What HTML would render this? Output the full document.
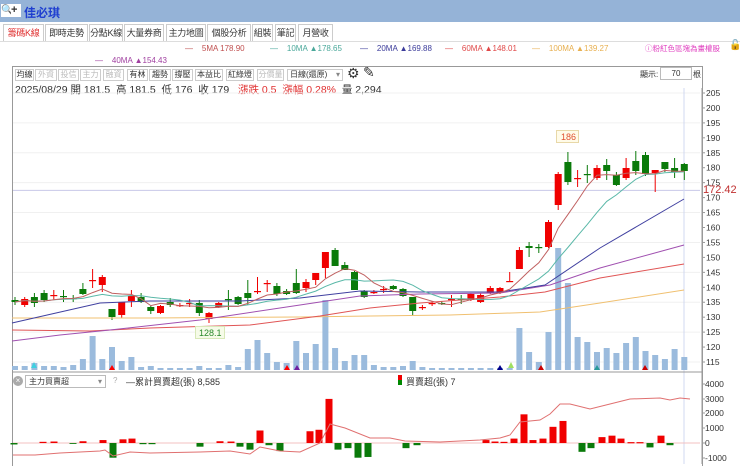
<!DOCTYPE html>
<html><head><meta charset="utf-8">
<style>
*{margin:0;padding:0;box-sizing:border-box}
body{width:740px;height:464px;overflow:hidden;background:#fff;font-family:"Liberation Sans","Noto Sans CJK TC",sans-serif;position:relative;font-size:9px;color:#333}
.a{position:absolute;white-space:nowrap}
.hdr{left:0;top:0;width:740px;height:22px;background:#95b3d7}
.tab{position:absolute;top:24px;height:17px;border:1px solid #ccc;border-bottom:none;background:#fff;font-size:9px;line-height:16px;text-align:center;color:#333;white-space:nowrap;overflow:hidden;letter-spacing:-0.3px}
.btn{position:absolute;top:69px;height:12px;border:1px solid #ccc;font-size:8px;line-height:10px;text-align:center;color:#333;background:#fff;white-space:nowrap;overflow:hidden}
.dis{color:#bbb}
.lg{font-size:8px;top:44px}
</style></head><body>
<div class="a hdr"></div>
<div class="a" style="left:1px;top:4px;width:12px;height:13px;background:#fff;font-size:10px;line-height:13px">&#128269;</div>
<div class="a" style="left:11px;top:4px;width:10px;height:13px;background:#fff;font-size:11px;line-height:13px;font-weight:bold">+</div>
<div class="a" style="left:24px;top:4px;font-size:12px;font-weight:bold;color:#1f3fd0">佳必琪</div>

<div class="tab" style="left:3px;width:41px;color:#e03030">籌碼K線</div>
<div class="tab" style="left:45px;width:43px">即時走勢</div>
<div class="tab" style="left:89px;width:34px">分點K線</div>
<div class="tab" style="left:124px;width:40px">大量券商</div>
<div class="tab" style="left:166px;width:40px">主力地圖</div>
<div class="tab" style="left:207px;width:44px">個股分析</div>
<div class="tab" style="left:252px;width:21px">組裝</div>
<div class="tab" style="left:275px;width:21px">筆記</div>
<div class="tab" style="left:298px;width:35px">月營收</div>
<div class="a" style="left:0;top:41px;width:740px;border-top:1px solid #ddd"></div>

<div class="a lg" style="left:185px;color:#c05050">—&nbsp;&nbsp;&nbsp; 5MA 178.90</div>
<div class="a lg" style="left:270px;color:#4aa89a">—&nbsp;&nbsp;&nbsp; 10MA ▲178.65</div>
<div class="a lg" style="left:360px;color:#3b3b9a">—&nbsp;&nbsp;&nbsp; 20MA ▲169.88</div>
<div class="a lg" style="left:445px;color:#e04848">—&nbsp;&nbsp;&nbsp; 60MA ▲148.01</div>
<div class="a lg" style="left:532px;color:#e8b050">—&nbsp;&nbsp;&nbsp; 100MA ▲139.27</div>
<div class="a lg" style="left:95px;top:56px;color:#a040a0">—&nbsp;&nbsp;&nbsp; 40MA ▲154.43</div>
<div class="a" style="left:645px;top:43px;color:#e040c0;font-size:7.5px">ⓘ粉紅色區塊為畫權股</div>
<div class="a" style="left:729px;top:40px;font-size:10px">🔓</div>

<div class="a" style="left:12px;top:66px;width:691px;height:400px;border:1px solid #999;border-bottom:none"></div>
<div class="btn" style="left:15px;width:19px">均線</div>
<div class="btn dis" style="left:35px;width:22px">外資</div>
<div class="btn dis" style="left:58px;width:21px">投信</div>
<div class="btn dis" style="left:80px;width:21px">主力</div>
<div class="btn dis" style="left:103px;width:21px">融資</div>
<div class="btn" style="left:127px;width:21px">有林</div>
<div class="btn" style="left:149px;width:22px">趨勢</div>
<div class="btn" style="left:172px;width:21px">撐壓</div>
<div class="btn" style="left:195px;width:28px">本益比</div>
<div class="btn" style="left:226px;width:28px">紅綠燈</div>
<div class="btn dis" style="left:257px;width:27px">分價量</div>
<div class="btn" style="left:287px;width:56px;text-align:left;padding-left:2px">日線(還原)<span style="float:right;margin-right:2px;color:#888">▾</span></div>
<div class="a" style="left:347px;top:65px;font-size:14px">⚙</div>
<div class="a" style="left:363px;top:64px;font-size:14px">✎</div>
<div class="a" style="left:640px;top:69px;font-size:8px">顯示:</div>
<div class="a" style="left:660px;top:67px;width:32px;height:13px;border:1px solid #bbb;font-size:8px;text-align:center;line-height:11px">70</div>
<div class="a" style="left:693px;top:69px;font-size:8px">根</div>
<div class="a" style="left:15px;top:82px;font-size:10.5px;color:#333">2025/08/29 開 181.5 &nbsp;高 181.5 &nbsp;低 176 &nbsp;收 179 &nbsp; <span style="color:#e03030">漲跌 0.5 &nbsp;漲幅 0.28%</span> &nbsp;量 2,294</div>

<svg class="a" id="s" style="left:0;top:0" width="740" height="464"></svg>

<div class="a" style="left:13px;top:376px;width:10px;height:10px;border-radius:50%;background:#aaa;color:#fff;font-size:8px;line-height:10px;text-align:center">×</div>
<div class="a" style="left:25px;top:375px;width:81px;height:13px;border:1px solid #bbb;background:#fff;font-size:8px;line-height:11px;padding-left:3px">主力買賣超<span style="float:right;margin-right:3px;color:#888">▾</span></div>
<div class="a" style="left:113px;top:376px;color:#aaa;font-size:8px">?</div>
<div class="a" style="left:126px;top:375px;font-size:9px">—累計買賣超(張) 8,585</div>
<div class="a" style="left:398px;top:375px;width:4px;height:10px;background:linear-gradient(#e00 50%,#080 50%)"></div>
<div class="a" style="left:406px;top:375px;font-size:9px">買賣超(張) 7</div>
<div class="a" style="left:703px;top:184px;font-size:11px;color:#c03030">172.42</div>

<script>
var s=document.getElementById('s'),h='';
function L(x1,y1,x2,y2,c,w){h+='<line x1="'+x1+'" y1="'+y1+'" x2="'+x2+'" y2="'+y2+'" stroke="'+c+'" stroke-width="'+(w||1)+'"/>';}
function R(x,y,w,hh,c){h+='<rect x="'+x+'" y="'+y+'" width="'+w+'" height="'+hh+'" fill="'+c+'"/>';}
function T(x,y,t,c,fs){h+='<text x="'+x+'" y="'+y+'" fill="'+(c||'#333')+'" font-size="'+(fs||9)+'" font-family="Liberation Sans">'+t+'</text>';}
function P(pts,c,w){h+='<polyline fill="none" stroke="'+c+'" stroke-width="'+(w||1)+'" points="'+pts.map(p=>p.join(',')).join(' ')+'"/>';}
for(var p=205;p>=115;p-=10){var y=93+(205-p)*2.989;L(13,y,700,y,'#f0f0f0');}
for(var p=205;p>=115;p-=5){var y=93+(205-p)*2.989;L(702,y,705,y,'#999');T(706,y+3,p,'#333',8.5);}
L(13,190.4,700,190.4,'#c8c8e8');
L(684,88,684,464,'#d0d8f0');
L(702,88,702,464,'#999');
L(13,372,702,372,'#999');
var vt=[366,366,363,366,366,367,365,359,336,359,347,361,357,367,366,368,368,368,368,366,368,368,365,367,349,340,353,362,363,341,353,344,300,348,361,355,355,365,367,367,366,361,367,368,368,368,368,368,368,368,368,368,328,352,362,332,248,283,337,342,352,348,353,343,337,351,355,359,349,357];
for(var i=0;i<70;i++){var x=15+i*9.7;R(x-3,vt[i],6,370-vt[i],'#9bbbdd');}
var c=[['g',300,302,297,305],['r',299,305,297,307],['g',297,303,293,307],['g',293,300,290,302],['r',295,295,290,300],['g',296,296,290,302],['g',298,298,295,302],['g',289,294,283,295],['r',280,280,269,288],['r',277,285,275,292],['g',309,317,309,320],['r',302,315,302,318],['r',296,301,290,307],['g',297,302,293,303],['g',307,311,306,314],['r',306,313,305,314],['g',302,305,298,307],['r',305,305,303,307],['r',303,303,299,307],['g',303,313,300,316],['r',313,319,312,323],['r',303,307,302,308],['g',299,299,290,310],['g',297,304,296,305],['g',293,298,280,305],['r',291,291,277,294],['r',283,283,280,292],['g',286,294,283,296],['g',291,294,289,295],['g',283,293,269,294],['r',282,288,279,292],['r',273,280,273,285],['r',252,268,252,278],['g',250,266,248,266],['g',265,270,262,270],['g',272,290,271,290],['g',291,297,290,298],
['r',292,292,290,294],['r',289,289,286,293],['g',286,289,285,290],['g',289,296,288,297],['g',297,311,297,316],['r',307,307,305,310],['r',303,303,301,306],['g',303,303,301,305],['r',299,299,295,307],['g',299,299,295,304],['r',294,300,293,301],['r',295,302,293,303],['r',288,293,286,294],['r',288,293,287,294],['r',281,281,272,282],['r',250,269,247,269],['g',246,248,242,257],['g',247,247,244,253],['r',222,247,220,248],['r',174,205,172,210],['g',162,182,152,185],['r',178,178,170,187],['g',174,174,165,183],['r',168,178,165,180],['g',165,171,159,180],['g',175,185,172,186],['r',168,178,158,180],['g',161,171,151,175],['g',155,174,152,176],['r',170,173,170,192],['g',162,169,162,172],['g',168,172,158,178],['g',164,171,163,180]];
var closes=[];
for(var i=0;i<70;i++){var d=c[i],x=15+i*9.7,col=d[0]=='r'?'#f00000':'#0a7a0a';L(x,d[3],x,d[4],col);R(x-3.5,d[1],7,Math.max(1.2,d[2]-d[1]),col);closes.push(d[0]=='r'?d[1]:d[2]);}
function ma(n){var a=[];for(var i=0;i<70;i++){var s0=0,k=0;for(var j=Math.max(0,i-n+1);j<=i;j++){s0+=closes[j];k++;}a.push([15+i*9.7,(s0/k).toFixed(1)]);}return a;}
P([[12,318],[150,318],[300,317],[370,316],[450,315],[540,312],[600,303],[684,290]],'#f0c070');
P([[12,330],[90,331],[150,328],[250,325],[320,316],[370,308],[420,303],[500,297],[545,292],[600,278],[684,264]],'#e05555');
P([[12,341],[60,335],[110,330],[200,320],[300,305],[360,296],[420,294],[500,293],[550,285],[600,268],[684,245]],'#a050b0');
P([[12,323],[100,303],[150,301],[240,301],[300,298],[360,291],[420,292],[500,292],[545,285],[600,248],[684,199]],'#4040a0');
P(ma(10),'#5ab8a8');P(ma(5),'#c06060');
h+='<rect x="556.5" y="130.5" width="22" height="12" fill="#fffbe8" stroke="#e8d8a8"/>';T(561,140,'186','#e05030',9);
h+='<rect x="195.5" y="326.5" width="29" height="12" fill="#f6fbe8" stroke="#d8e8b8"/>';T(199,336,'128.1','#2a8a2a',9);
[[34,'#40d0e0'],[511,'#a0e060']].forEach(function(m){h+='<polygon points="'+(m[0]-3)+',368 '+(m[0]+3)+',368 '+m[0]+',362" fill="'+m[1]+'"/>';});
[[112,'#f00'],[287,'#f00'],[297,'#7020a0'],[500,'#00008b'],[541,'#c00'],[597,'#2a9a9a'],[645,'#c00']].forEach(function(m){h+='<polygon points="'+(m[0]-3)+',370 '+(m[0]+3)+',370 '+m[0]+',365" fill="'+m[1]+'"/>';});
[[4000,384],[3000,399],[2000,413],[1000,428],[0,443],[-1000,458]].forEach(function(a){L(702,a[1],705,a[1],'#999');T(705,a[1]+3,a[0],'#333',8.5);});
L(13,443,700,443,'#f3c0c0',1);
var b=[[14,-100],[43,80],[54,100],[73,-60],[83,120],[103,200],[113,-1000],[123,250],[132,300],[143,-80],[152,-80],[200,-250],[220,120],[231,100],[240,-250],[250,-450],[260,850],[269,-150],[280,-550],[310,800],[319,900],[329,3000],[338,-450],[348,-350],[358,-1000],[368,-950],[406,-350],[417,-150],[486,200],[495,100],[504,80],[514,300],[524,1950],[533,200],[543,300],[553,1100],[563,1500],[582,-600],[591,-350],[602,400],[612,500],[621,300],[631,60],[640,60],[650,-300],[661,500],[670,-150]];
b.forEach(function(a){var hh=a[1]*0.0147;if(hh>=0)R(a[0]-3.5,443-hh,7,Math.max(hh,1.2),'#f00000');else R(a[0]-3.5,443,7,-hh,'#0a7a0a');});
P([[13,455],[35,455],[60,453],[100,451],[105,450],[113,456],[130,452],[150,453],[200,452],[230,451],[250,454],[260,447],[280,451],[300,452],[320,443],[330,424],[345,428],[370,438],[390,438],[405,441],[440,442],[480,440],[500,438],[510,435],[520,422],[540,420],[550,414],[560,404],[570,404],[590,409],[610,404],[630,399],[660,398],[670,400],[680,398],[690,399]],'#e07070');
s.innerHTML=h;
</script>
</body></html>
